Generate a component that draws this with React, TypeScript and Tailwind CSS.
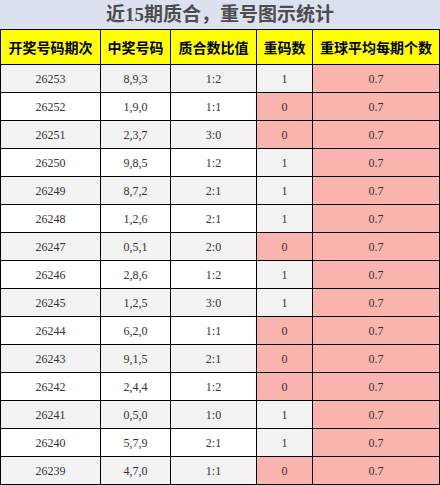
const rows: [string, string, string, number][] = [
  ['26253', '8,9,3', '1:2', 1],
  ['26252', '1,9,0', '1:1', 0],
  ['26251', '2,3,7', '3:0', 0],
  ['26250', '9,8,5', '1:2', 1],
  ['26249', '8,7,2', '2:1', 1],
  ['26248', '1,2,6', '2:1', 1],
  ['26247', '0,5,1', '2:0', 0],
  ['26246', '2,8,6', '1:2', 1],
  ['26245', '1,2,5', '3:0', 1],
  ['26244', '6,2,0', '1:1', 0],
  ['26243', '9,1,5', '2:1', 0],
  ['26242', '2,4,4', '1:2', 0],
  ['26241', '0,5,0', '1:0', 1],
  ['26240', '5,7,9', '2:1', 1],
  ['26239', '4,7,0', '1:1', 0],
]

const headers = ['开奖号码期次', '中奖号码', '质合数比值', '重码数', '重球平均每期个数']

export default function App() {
  return (
    <div className="w-[440px] bg-white font-['Liberation_Serif','Noto_Sans_CJK_SC',serif]">
      <div className="h-[29px] bg-[#dce1f0] flex items-center justify-center text-[19px] font-bold text-[#4d4d4d] leading-none">
        近15期质合，重号图示统计
      </div>
      <table className="w-[439px] border-collapse table-fixed">
        <colgroup>
          <col className="w-[100px]" />
          <col className="w-[70px]" />
          <col className="w-[86px]" />
          <col className="w-[56px]" />
          <col className="w-[127px]" />
        </colgroup>
        <thead>
          <tr className="h-[35px] bg-[#ffff00]">
            {headers.map(h => (
              <th key={h} className="border border-black text-[14px] font-bold text-black p-0 whitespace-nowrap font-['Noto_Sans_CJK_SC',sans-serif]">
                {h}
              </th>
            ))}
          </tr>
        </thead>
        <tbody>
          {rows.map((r, i) => {
            const bg = i % 2 === 0 ? 'bg-[#f2f2f2]' : 'bg-white'
            return (
              <tr key={r[0]} className="h-[28px] text-[12px] text-[#333]">
                <td className={`border border-black text-center p-0 ${bg}`}>{r[0]}</td>
                <td className={`border border-black text-center p-0 ${bg}`}>{r[1]}</td>
                <td className={`border border-black text-center p-0 ${bg}`}>{r[2]}</td>
                <td className={`border border-black text-center p-0 ${r[3] === 0 ? 'bg-[#fab4ae]' : 'bg-[#f2f2f2]'}`}>{r[3]}</td>
                <td className="border border-black text-center p-0 bg-[#fab4ae]">0.7</td>
              </tr>
            )
          })}
        </tbody>
      </table>
    </div>
  )
}
